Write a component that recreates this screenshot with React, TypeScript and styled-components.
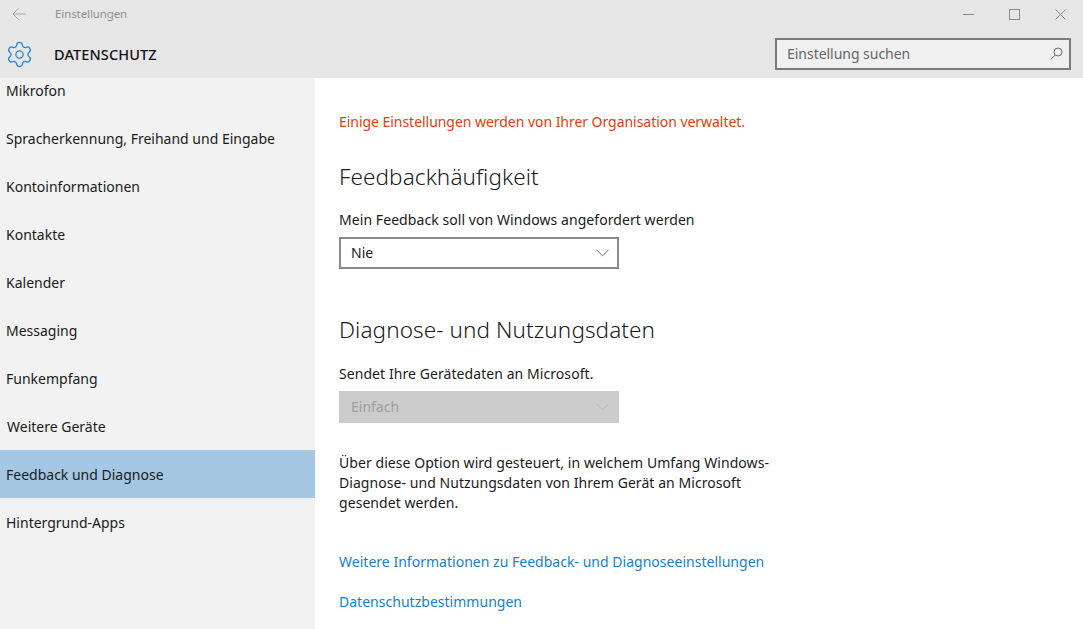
import { ReactNode } from 'react'
import styled, { createGlobalStyle } from 'styled-components'
import { Settings } from 'lucide-react'

const GlobalStyle = createGlobalStyle`
  html, body {
    margin: 0;
    padding: 0;
    height: 100%;
    overflow: hidden;
    background: #fff;
  }
  body {
    font-family: 'Noto Sans', 'Open Sans', sans-serif;
    color: #1a1a1a;
  }
`

const Window = styled.div`
  width: 1083px;
  height: 629px;
  display: flex;
  flex-direction: column;
  overflow: hidden;
`

const Header = styled.header`
  height: 78px;
  flex: none;
  background: #e6e6e6;
  display: flex;
  flex-direction: column;
`

const TitleBar = styled.div`
  height: 28px;
  display: flex;
  align-items: center;
`

const BackButton = styled.div`
  width: 55px;
  padding-left: 12px;
  box-sizing: border-box;
  display: flex;
  align-items: center;
  color: #a6a6a6;
`

const WindowTitle = styled.span`
  font-size: 11.5px;
  letter-spacing: -0.1px;
  color: #8f8f8f;
  padding-bottom: 1px;
`

const WindowControls = styled.div`
  margin-left: auto;
  display: flex;
  align-items: center;
  gap: 35px;
  padding-right: 17px;
  color: #8c8c8c;
`

const PageBar = styled.div`
  flex: 1;
  display: flex;
  align-items: center;
  padding: 2px 12px 0 5px;
`

const PageIcon = styled.div`
  width: 49px;
  display: flex;
  color: #2b88d8;
`

const PageTitle = styled.h1`
  margin: 0;
  font-size: 14.5px;
  font-weight: 500;
  letter-spacing: 0.12px;
  color: #111;
`

const SearchBox = styled.div`
  margin-left: auto;
  width: 296px;
  height: 32px;
  box-sizing: border-box;
  border: 2px solid #7a7a7a;
  background: #f0f0f0;
  display: flex;
  align-items: center;
  justify-content: space-between;
  padding: 0 6px 1px 10px;
  font-size: 14px;
  letter-spacing: -0.03px;
  color: #666;
`

const Body = styled.div`
  flex: 1;
  display: flex;
  min-height: 0;
`

const Sidebar = styled.nav`
  width: 315px;
  flex: none;
  background: #f2f2f2;
  overflow: hidden;
`

const NavList = styled.div`
  margin-top: -12px;
  display: flex;
  flex-direction: column;
`

const NavItem = styled.div<{ $active?: boolean; $inset?: number }>`
  height: 48px;
  flex: none;
  display: flex;
  align-items: center;
  padding-left: ${p => p.$inset ?? 6}px;
  font-size: 14px;
  letter-spacing: 0;
  color: #1a1a1a;
  background: ${p => (p.$active ? '#a4c8e4' : 'transparent')};
`

const Main = styled.main`
  flex: 1;
  padding: 34px 0 0 24px;
  display: flex;
  flex-direction: column;
  align-items: flex-start;
`

const Notice = styled.p`
  margin: 0 0 30px;
  font-size: 14px;
  line-height: 20px;
  letter-spacing: -0.04px;
  color: #e23c10;
`

const SectionTitle = styled.h2<{ $gap: number }>`
  margin: 0 0 ${p => p.$gap}px;
  font-size: 22.5px;
  line-height: 30px;
  font-weight: 300;
  letter-spacing: 0.1px;
  color: #1a1a1a;
`

const Label = styled.p`
  margin: 0 0 7px;
  font-size: 14px;
  line-height: 20px;
  letter-spacing: 0.07px;
  color: #1a1a1a;
`

const Select = styled.div<{ $disabled?: boolean }>`
  width: 280px;
  height: 32px;
  flex: none;
  box-sizing: border-box;
  border: 2px solid ${p => (p.$disabled ? '#cccccc' : '#8a8a8a')};
  background: ${p => (p.$disabled ? '#cccccc' : '#fff')};
  color: ${p => (p.$disabled ? '#9e9e9e' : '#1a1a1a')};
  display: flex;
  align-items: center;
  justify-content: space-between;
  padding: 0 8px 1px 10px;
  font-size: 14px;
  letter-spacing: 0;
  margin-bottom: ${p => (p.$disabled ? 30 : 46)}px;
`

const Chevron = styled.svg<{ $disabled?: boolean }>`
  width: 13px;
  height: 8px;
  color: ${p => (p.$disabled ? '#b5b5b5' : '#6f6f6f')};
`

const Description = styled.p`
  margin: 0 0 39px;
  width: 440px;
  font-size: 14px;
  line-height: 20px;
  letter-spacing: 0.06px;
  color: #1a1a1a;
`

const HelpLink = styled.a`
  font-size: 14px;
  line-height: 20px;
  letter-spacing: 0.02px;
  color: #1580cf;
  margin-bottom: 20px;
`

function Dropdown({ disabled, children }: { disabled?: boolean; children: ReactNode }) {
  return (
    <Select $disabled={disabled}>
      {children}
      <Chevron $disabled={disabled} viewBox="0 0 13 8">
        <path d="M0.5 0.8 L6.5 6.8 L12.5 0.8" fill="none" stroke="currentColor" strokeWidth="1" />
      </Chevron>
    </Select>
  )
}

const navItems = [
  'Mikrofon',
  'Spracherkennung, Freihand und Eingabe',
  'Kontoinformationen',
  'Kontakte',
  'Kalender',
  'Messaging',
  'Funkempfang',
  'Weitere Geräte',
  'Feedback und Diagnose',
  'Hintergrund-Apps'
]

export default function App() {
  return (
    <Window>
      <GlobalStyle />
      <Header>
        <TitleBar>
          <BackButton>
            <svg width="14" height="12" viewBox="0 0 14 12" fill="none" stroke="currentColor" strokeWidth="1">
              <path d="M14 6 H1 M6.5 0.5 L1 6 L6.5 11.5" />
            </svg>
          </BackButton>
          <WindowTitle>Einstellungen</WindowTitle>
          <WindowControls>
            <svg width="11" height="11" viewBox="0 0 11 11" stroke="currentColor" fill="none">
              <path d="M0 5.5 H11" />
            </svg>
            <svg width="11" height="11" viewBox="0 0 11 11" stroke="currentColor" fill="none">
              <rect x="0.5" y="0.5" width="10" height="10" />
            </svg>
            <svg width="11" height="11" viewBox="0 0 11 11" stroke="currentColor" fill="none">
              <path d="M0.5 0.5 L10.5 10.5 M10.5 0.5 L0.5 10.5" />
            </svg>
          </WindowControls>
        </TitleBar>
        <PageBar>
          <PageIcon>
            <Settings size={29} strokeWidth={1.1} />
          </PageIcon>
          <PageTitle>DATENSCHUTZ</PageTitle>
          <SearchBox>
            Einstellung suchen
            <svg width="13" height="13" viewBox="0 0 13 13" fill="none" stroke="#6a6a6a" strokeWidth="1">
              <circle cx="8" cy="5" r="4" />
              <path d="M5.2 8 L0.8 12.4" />
            </svg>
          </SearchBox>
        </PageBar>
      </Header>
      <Body>
        <Sidebar>
          <NavList>
            {navItems.map(item => (
              <NavItem
                key={item}
                $active={item === 'Feedback und Diagnose'}
                $inset={item === 'Weitere Geräte' ? 7 : 6}
              >
                {item}
              </NavItem>
            ))}
          </NavList>
        </Sidebar>
        <Main>
          <Notice>Einige Einstellungen werden von Ihrer Organisation verwaltet.</Notice>
          <SectionTitle $gap={18}>Feedbackhäufigkeit</SectionTitle>
          <Label>Mein Feedback soll von Windows angefordert werden</Label>
          <Dropdown>Nie</Dropdown>
          <SectionTitle $gap={19}>Diagnose- und Nutzungsdaten</SectionTitle>
          <Label>Sendet Ihre Gerätedaten an Microsoft.</Label>
          <Dropdown disabled>Einfach</Dropdown>
          <Description>
            Über diese Option wird gesteuert, in welchem Umfang Windows-
            <br />
            Diagnose- und Nutzungsdaten von Ihrem Gerät an Microsoft
            <br />
            gesendet werden.
          </Description>
          <HelpLink>Weitere Informationen zu Feedback- und Diagnoseeinstellungen</HelpLink>
          <HelpLink>Datenschutzbestimmungen</HelpLink>
        </Main>
      </Body>
    </Window>
  )
}
